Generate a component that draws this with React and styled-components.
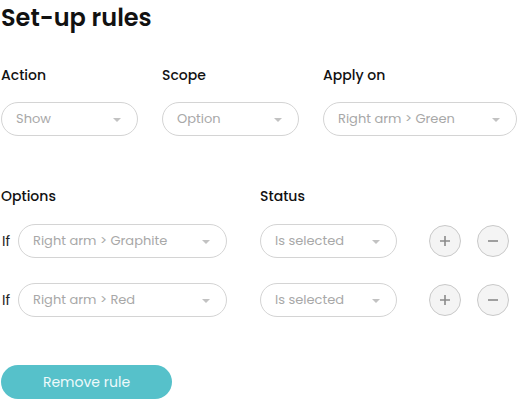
import React from "react";
import styled, { createGlobalStyle } from "styled-components";

const Global = createGlobalStyle`
  html, body { margin: 0; padding: 0; background: #fff; }
  body { font-family: "Poppins", "Inter", "Noto Sans", sans-serif; color: #141414; }
  * { box-sizing: border-box; }
`;

const Page = styled.div`
  width: 517px;
  height: 400px;
  overflow: hidden;
  padding-left: 1px;
  display: flex;
  flex-direction: column;
`;

const Title = styled.h1`
  margin: 0;
  font-size: 24px;
  line-height: 36px;
  font-weight: 600;
  color: #111;
`;

const TopGrid = styled.div`
  margin-top: 29px;
  display: grid;
  grid-template-columns: 137px 137px 194px;
  column-gap: 24px;
  row-gap: 17px;
`;

const Label = styled.div`
  font-size: 14px;
  line-height: 20px;
  font-weight: 500;
  color: #111;
`;

const SelectBox = styled.div`
  width: ${(p) => p.$w}px;
  height: 34px;
  border: 1px solid #d4d4d4;
  border-radius: 17px;
  display: flex;
  align-items: center;
  justify-content: space-between;
  padding: 0 16px 0 14px;
  font-size: 13px;
  color: #a8a8a8;
  background: #fff;
  flex-shrink: 0;
`;

const Caret = styled.span`
  width: 0;
  height: 0;
  border-left: 4px solid transparent;
  border-right: 4px solid transparent;
  border-top: 4px solid #c2c2c2;
  margin-top: 1px;
`;

const Select = ({ w, children }) => (
  <SelectBox $w={w}>
    <span>{children}</span>
    <Caret />
  </SelectBox>
);

const Section = styled.div`
  margin-top: ${(p) => p.$mt}px;
  display: flex;
  flex-direction: column;
  gap: ${(p) => p.$gap}px;
`;

const Row = styled.div`
  display: flex;
  align-items: center;
`;

const Cell = styled.div`
  width: ${(p) => p.$w}px;
  flex-shrink: 0;
  display: flex;
  align-items: center;
`;

const If = styled.span`
  width: 17px;
  font-size: 14px;
  font-weight: 400;
  color: #222;
  padding-left: 1px;
`;

const Circle = styled.button`
  width: 32px;
  height: 32px;
  border-radius: 50%;
  border: 1px solid #c9c9c9;
  background: #f4f4f4;
  padding: 0;
  display: flex;
  align-items: center;
  justify-content: center;
  margin-left: ${(p) => p.$ml}px;
  flex-shrink: 0;
`;

const RemoveButton = styled.button`
  margin-top: 48px;
  width: 171px;
  height: 34px;
  border: none;
  border-radius: 17px;
  background: #56c1ca;
  color: #eefafb;
  font-family: inherit;
  font-size: 14px;
  font-weight: 400;
  cursor: pointer;
`;

const PlusIcon = () => (
  <svg width="12" height="12" viewBox="0 0 12 12">
    <path d="M6 1v10M1 6h10" stroke="#8a8a8a" strokeWidth="1.6" />
  </svg>
);
const MinusIcon = () => (
  <svg width="12" height="12" viewBox="0 0 12 12">
    <path d="M1 6h10" stroke="#8a8a8a" strokeWidth="1.6" />
  </svg>
);

const RuleRow = ({ value }) => (
  <Row>
    <Cell $w={259}>
      <If>If</If>
      <Select w={209}>{value}</Select>
    </Cell>
    <Select w={137}>Is selected</Select>
    <Circle $ml={32}><PlusIcon /></Circle>
    <Circle $ml={16}><MinusIcon /></Circle>
  </Row>
);

export default function App() {
  return (
    <>
      <Global />
      <Page>
        <Title>Set-up rules</Title>
        <TopGrid>
          <Label>Action</Label>
          <Label>Scope</Label>
          <Label>Apply on</Label>
          <Select w={137}>Show</Select>
          <Select w={137}>Option</Select>
          <Select w={194}>Right arm &gt; Green</Select>
        </TopGrid>
        <Section $mt={50} $gap={18}>
          <Row>
            <Cell $w={259}><Label>Options</Label></Cell>
            <Label>Status</Label>
          </Row>
        </Section>
        <Section $mt={18} $gap={25}>
          <RuleRow value="Right arm > Graphite" />
          <RuleRow value="Right arm > Red" />
        </Section>
        <div>
          <RemoveButton>Remove rule</RemoveButton>
        </div>
      </Page>
    </>
  );
}
